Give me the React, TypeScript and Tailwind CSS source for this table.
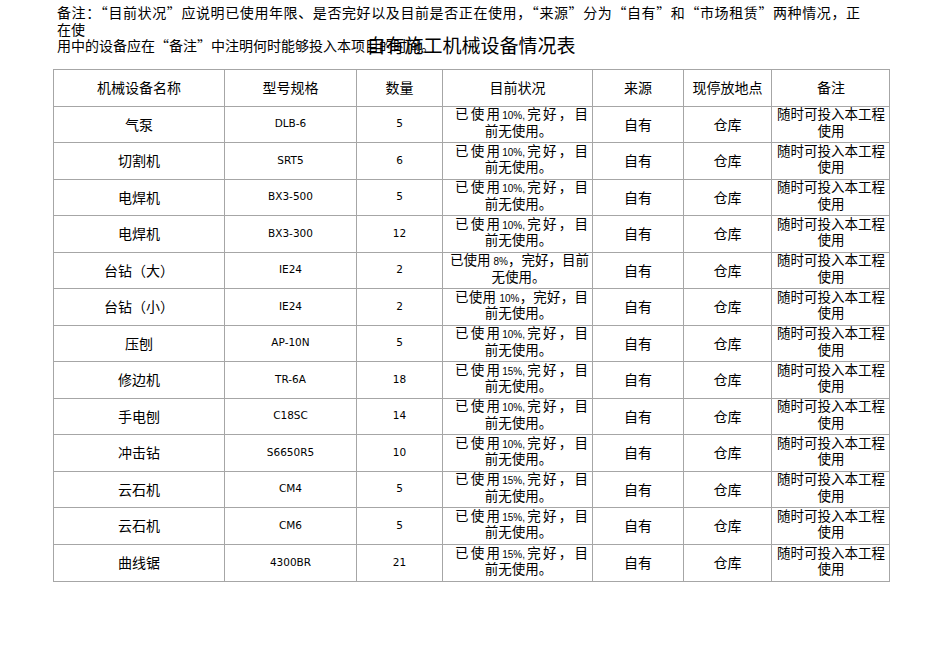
const cjk = '"Noto Sans CJK SC", "DejaVu Sans", sans-serif';

type Row = {
  name: string;
  model: string;
  qty: string;
  pct: string;
  variant?: "a" | "b" | "c";
};

const rows: Row[] = [
  { name: "气泵", model: "DLB-6", qty: "5", pct: "10%" },
  { name: "切割机", model: "SRT5", qty: "6", pct: "10%" },
  { name: "电焊机", model: "BX3-500", qty: "5", pct: "10%" },
  { name: "电焊机", model: "BX3-300", qty: "12", pct: "10%" },
  { name: "台钻（大）", model: "IE24", qty: "2", pct: "8%", variant: "b" },
  { name: "台钻（小）", model: "IE24", qty: "2", pct: "10%", variant: "c" },
  { name: "压刨", model: "AP-10N", qty: "5", pct: "10%" },
  { name: "修边机", model: "TR-6A", qty: "18", pct: "15%" },
  { name: "手电刨", model: "C18SC", qty: "14", pct: "10%" },
  { name: "冲击钻", model: "S6650R5", qty: "10", pct: "10%" },
  { name: "云石机", model: "CM4", qty: "5", pct: "15%" },
  { name: "云石机", model: "CM6", qty: "5", pct: "15%" },
  { name: "曲线锯", model: "4300BR", qty: "21", pct: "15%" },
];

const cols = "grid grid-cols-[171px_132px_86px_150px_91px_88px_118px]";
const cell = "flex items-center justify-center border-r border-[#a6a6a6] last:border-r-0 text-center";

function Small({ children }: { children: React.ReactNode }) {
  return (
    <span className="text-[10px] leading-none" style={{ fontFamily: '"Liberation Sans", sans-serif' }}>
      {children}
    </span>
  );
}

function Status({ r }: { r: Row }) {
  if (r.variant === "b") {
    return (
      <div className="w-full pl-[7px] pr-[5px] leading-[16.5px] -mt-[5px]">
        <div className="whitespace-nowrap text-justify [text-align-last:justify]">
          已使用 <Small>{r.pct}</Small>，完好，目前
        </div>
        <div>无使用。</div>
      </div>
    );
  }
  if (r.variant === "c") {
    return (
      <div className="w-full pl-[12px] pr-[4px] leading-[16.5px] -mt-[5px]">
        <div className="whitespace-nowrap text-justify [text-align-last:justify]">
          已使用 <Small>{r.pct}</Small>，完好，目
        </div>
        <div className="pr-[6px]">前无使用。</div>
      </div>
    );
  }
  return (
    <div className="w-full pl-[12px] pr-[4px] leading-[16.5px] -mt-[5px]">
      <div className="flex items-baseline justify-between whitespace-nowrap">
        <span>已</span>
        <span>使</span>
        <span>用</span>
        <Small>{r.pct},</Small>
        <span>完</span>
        <span>好</span>
        <span>，</span>
        <span>目</span>
      </div>
      <div className="pr-[6px]">前无使用。</div>
    </div>
  );
}

export default function App() {
  return (
    <div lang="zh-CN" className="min-h-screen bg-white text-black" style={{ fontFamily: cjk }}>
      <div className="relative pl-[57px] pt-[4px] text-[14px] leading-[16.5px]">
        <div className="whitespace-nowrap tracking-[0.6px]">
          备注：“目前状况”应说明已使用年限、是否完好以及目前是否正在使用，“来源”分为“自有”和“市场租赁”两种情况，正
        </div>
        <div>在使</div>
        <div>用中的设备应在“备注”中注明何时能够投入本项目的时间。</div>
        <div className="absolute left-[53px] top-[33px] w-[836px] text-center text-[19px] leading-[24px]">
          自有施工机械设备情况表
        </div>
      </div>

      <div className="ml-[53px] mt-[15px] w-[837px] border border-[#a6a6a6]">
        <div className={`${cols} h-[37px] border-b border-[#a6a6a6] text-[14px]`}>
          {["机械设备名称", "型号规格", "数量", "目前状况", "来源", "现停放地点", "备注"].map((h) => (
            <div key={h} className={cell}>
              {h}
            </div>
          ))}
        </div>
        {rows.map((r, i) => (
          <div
            key={i}
            className={`${cols} h-[36.5px] border-b border-[#a6a6a6] last:border-b-0 text-[13.5px]`}
          >
            <div className={`${cell} text-[14px]`}>{r.name}</div>
            <div className={`${cell} text-[10.5px]`} style={{ fontFamily: '"DejaVu Sans", sans-serif' }}>
              {r.model}
            </div>
            <div className={`${cell} text-[10.5px]`} style={{ fontFamily: '"DejaVu Sans", sans-serif' }}>
              {r.qty}
            </div>
            <div className={cell}>
              <Status r={r} />
            </div>
            <div className={`${cell} text-[14px]`}>自有</div>
            <div className={`${cell} text-[14px]`}>仓库</div>
            <div className={`${cell} leading-[16.5px]`}>
              <div className="-mt-[5px]">
                随时可投入本工程
                <br />
                使用
              </div>
            </div>
          </div>
        ))}
      </div>
    </div>
  );
}
